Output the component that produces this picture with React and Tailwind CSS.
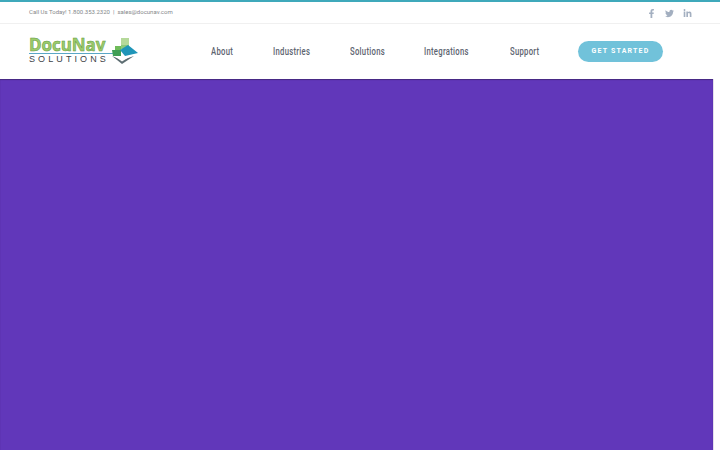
import React from "react";
import { FaFacebookF, FaTwitter, FaLinkedinIn } from "react-icons/fa";

const Logo = () => (
  <div className="flex items-center w-[110px] h-[28px] relative">
    <div className="flex flex-col -mt-[2px]">
      <span className="font-['Open_Sans',sans-serif] font-bold text-[17px] leading-[15px] tracking-[-0.05px] text-[#9ccb6c] [-webkit-text-stroke:0.5px_#5f9a3c]">
        DocuNav
      </span>
      <div className="h-px w-[84px] bg-[#5aa7c7] mt-px" />
      <span className="font-['Liberation_Sans',sans-serif] text-[9px] leading-[10px] tracking-[3.1px] text-[#3d4347]">
        SOLUTIONS
      </span>
    </div>
    <svg className="absolute left-[78px] top-0" width="33" height="28" viewBox="0 0 33 28">
      <rect x="14" y="0" width="8" height="7" fill="#b5d99a" />
      <rect x="14" y="7" width="8" height="4" fill="#8cc97a" />
      <rect x="8" y="8" width="6" height="4" fill="#6fbb5a" />
      <path d="M5 12 H14 V18 H6 Z" fill="#3f9e55" />
      <path d="M13 12 L21 7 L31 15 L18 18 Z" fill="#1f95b8" />
      <path d="M5 18 L15 26 L27 18 L15 22 Z" fill="#5d6d72" />
      <path d="M8 18.5 L15 23.5 L23 18.5 L15 20.5 Z" fill="#ffffff" />
    </svg>
  </div>
);

const NavLink = ({ children, className }) => (
  <a className={`${className} block whitespace-nowrap origin-left scale-x-[0.7]`}>{children}</a>
);

export default function App() {
  return (
    <div className="h-[450px] flex flex-col overflow-hidden bg-white">
      <div className="h-[2px] bg-[#3fa9bb]" />
      <div className="h-[22px] border-b border-[#f0f0f0] flex items-center justify-between pl-[29px] pr-[25px] bg-white">
        <p className="font-['Roboto',sans-serif] text-[6px] leading-none text-[#85888a] -mt-[2px]">
          Call Us Today! 1.800.353.2320&nbsp; |&nbsp; sales@docunav.com
        </p>
        <div className="flex items-center gap-[9px] pr-[3px] text-[#a3afc0] text-[9px] mt-[1px]">
          <FaFacebookF />
          <FaTwitter />
          <FaLinkedinIn />
        </div>
      </div>
      <header className="h-[55px] flex items-center pl-[29px] bg-white">
        <Logo />
        <nav className="flex items-center gap-[40px] ml-[72px] mt-[1px] font-['Roboto',sans-serif] font-medium text-[11px] tracking-[0.4px] text-[#5d6470]">
          <NavLink className="w-[22px]">About</NavLink>
          <NavLink className="w-[37px]">Industries</NavLink>
          <NavLink className="w-[34px]">Solutions</NavLink>
          <NavLink className="w-[46px]">Integrations</NavLink>
          <NavLink className="w-[28px]">Support</NavLink>
        </nav>
        <button className="ml-[40px] w-[85px] h-[21px] rounded-full bg-[#71c2da] text-white font-['Roboto',sans-serif] font-bold text-[7px] tracking-[1.2px]">
          GET STARTED
        </button>
      </header>
      <div className="flex-1 flex">
        <main className="w-[713px] bg-[#6137ba] shadow-[inset_0_1px_1px_rgba(50,30,90,0.6)]" />
        <div className="flex-1 bg-white border-l border-[#e4e0ec]" />
      </div>
    </div>
  );
}
